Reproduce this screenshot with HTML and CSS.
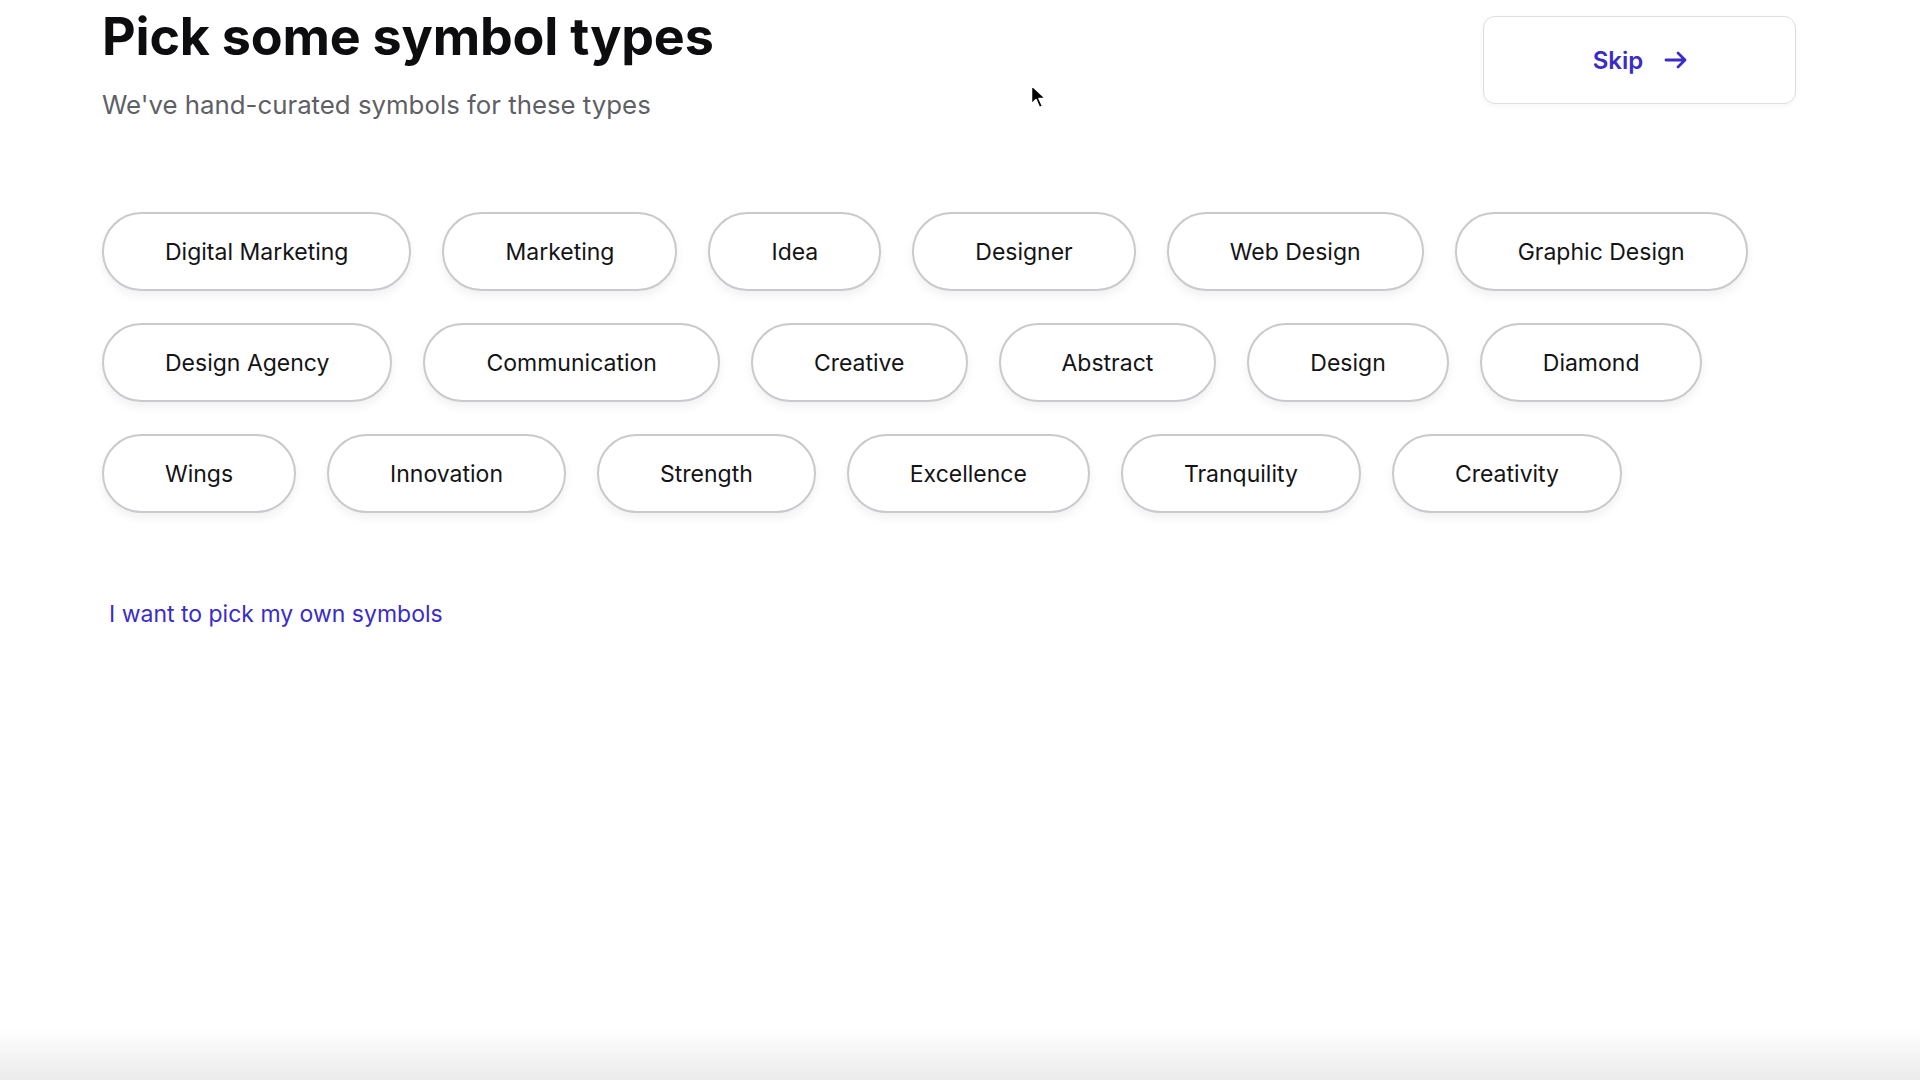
FILE: index.html
```html
<!DOCTYPE html>
<html lang="en">
<head>
<meta charset="utf-8">
<title>Pick some symbol types</title>
<link rel="stylesheet" href="styles.css">
</head>
<body>
<main class="page">
  <header class="header">
    <div class="titles">
      <h1 class="title">Pick some symbol types</h1>
      <p class="subtitle">We've hand-curated symbols for these types</p>
    </div>
    <button class="skip" type="button">
      <span>Skip</span>
      <svg class="skip-arrow" width="24" height="18" viewBox="0 0 24 18" aria-hidden="true">
        <path d="M2 9H21M14 2L21 9L14 16" fill="none" stroke="currentColor" stroke-width="2.8" stroke-linecap="round" stroke-linejoin="round"/>
      </svg>
    </button>
  </header>

  <section class="chips">
    <button class="chip" type="button">Digital Marketing</button>
    <button class="chip" type="button">Marketing</button>
    <button class="chip" type="button">Idea</button>
    <button class="chip" type="button">Designer</button>
    <button class="chip" type="button">Web Design</button>
    <button class="chip" type="button">Graphic Design</button>
    <button class="chip" type="button">Design Agency</button>
    <button class="chip" type="button">Communication</button>
    <button class="chip" type="button">Creative</button>
    <button class="chip" type="button">Abstract</button>
    <button class="chip" type="button">Design</button>
    <button class="chip" type="button">Diamond</button>
    <button class="chip" type="button">Wings</button>
    <button class="chip" type="button">Innovation</button>
    <button class="chip" type="button">Strength</button>
    <button class="chip" type="button">Excellence</button>
    <button class="chip" type="button">Tranquility</button>
    <button class="chip" type="button">Creativity</button>
  </section>

  <a class="own-link" href="#">I want to pick my own symbols</a>
</main>
<div class="fade"></div>
<svg class="cursor" width="18" height="26" viewBox="0 0 18 26" aria-hidden="true">
  <path d="M1.5 1.5V20L6 15.5L9.5 23.5L12.5 22.2L9 14.5H15.5Z" fill="#000" stroke="#fff" stroke-width="1.5" stroke-linejoin="round"/>
</svg>
</body>
</html>
```
FILE: styles.css
```css
* { box-sizing: border-box; }

html, body {
  margin: 0;
  padding: 0;
  background: #ffffff;
}

body {
  min-height: 100vh;
  display: flex;
  flex-direction: column;
  font-family: "Inter", "Lato", sans-serif;
  color: #111111;
  position: relative;
}

.page {
  flex: 1;
  padding: 0 124px 0 102px;
}

.header {
  display: flex;
  justify-content: space-between;
  align-items: flex-start;
}

.title {
  margin: 6px 0 0 0;
  font-size: 52px;
  line-height: 62px;
  font-weight: 700;
  letter-spacing: -0.2px;
  color: #0d0d0f;
}

.subtitle {
  margin: 21px 0 0 0;
  font-size: 25.8px;
  line-height: 32px;
  font-weight: 400;
  color: #5f5f66;
}

.skip {
  margin-top: 16px;
  width: 313px;
  height: 88px;
  display: flex;
  align-items: center;
  justify-content: center;
  gap: 21px;
  background: #ffffff;
  border: 1.5px solid #dedee2;
  border-radius: 12px;
  box-shadow: 0 2px 6px rgba(0, 0, 0, 0.04);
  font-family: inherit;
  font-size: 24px;
  font-weight: 600;
  color: #3a2cc8;
  cursor: pointer;
  padding: 0 0 0 2px;
}

.skip-arrow { display: block; }

.chips {
  margin-top: 91px;
  display: flex;
  flex-wrap: wrap;
  gap: 32px 31px;
}

.chip {
  height: 79px;
  padding: 0 61px;
  border: 2px solid #c9c9ce;
  border-radius: 40px;
  background: #ffffff;
  box-shadow: 0 5px 10px rgba(0, 0, 0, 0.06);
  font-family: inherit;
  font-size: 23px;
  font-weight: 400;
  color: #141416;
  cursor: pointer;
  white-space: nowrap;
}

.own-link {
  display: inline-block;
  margin: 87px 0 0 7px;
  font-size: 23px;
  line-height: 28px;
  color: #3a2cc8;
  text-decoration: none;
}

.fade {
  height: 52px;
  background: linear-gradient(to bottom, #ffffff, #ebebeb);
}

.cursor {
  position: absolute;
  left: 1030px;
  top: 84px;
}
```
